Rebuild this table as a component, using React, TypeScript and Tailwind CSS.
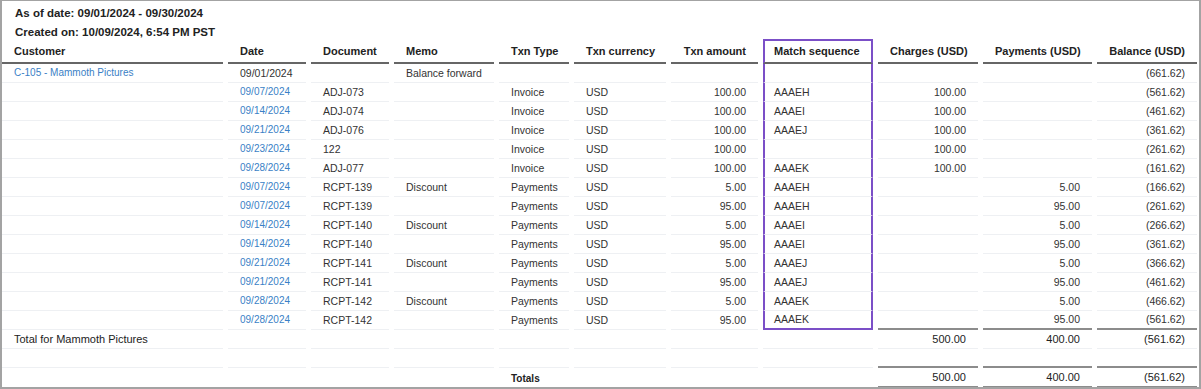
import React from "react";

type Row = string[];

// customer, date, document, memo, type, currency, amount, match, charges, payments, balance
const rows: Row[] = [
  ["C-105 - Mammoth Pictures", "09/01/2024", "", "Balance forward", "", "", "", "", "", "", "(661.62)"],
  ["", "09/07/2024", "ADJ-073", "", "Invoice", "USD", "100.00", "AAAEH", "100.00", "", "(561.62)"],
  ["", "09/14/2024", "ADJ-074", "", "Invoice", "USD", "100.00", "AAAEI", "100.00", "", "(461.62)"],
  ["", "09/21/2024", "ADJ-076", "", "Invoice", "USD", "100.00", "AAAEJ", "100.00", "", "(361.62)"],
  ["", "09/23/2024", "122", "", "Invoice", "USD", "100.00", "", "100.00", "", "(261.62)"],
  ["", "09/28/2024", "ADJ-077", "", "Invoice", "USD", "100.00", "AAAEK", "100.00", "", "(161.62)"],
  ["", "09/07/2024", "RCPT-139", "Discount", "Payments", "USD", "5.00", "AAAEH", "", "5.00", "(166.62)"],
  ["", "09/07/2024", "RCPT-139", "", "Payments", "USD", "95.00", "AAAEH", "", "95.00", "(261.62)"],
  ["", "09/14/2024", "RCPT-140", "Discount", "Payments", "USD", "5.00", "AAAEI", "", "5.00", "(266.62)"],
  ["", "09/14/2024", "RCPT-140", "", "Payments", "USD", "95.00", "AAAEI", "", "95.00", "(361.62)"],
  ["", "09/21/2024", "RCPT-141", "Discount", "Payments", "USD", "5.00", "AAAEJ", "", "5.00", "(366.62)"],
  ["", "09/21/2024", "RCPT-141", "", "Payments", "USD", "95.00", "AAAEJ", "", "95.00", "(461.62)"],
  ["", "09/28/2024", "RCPT-142", "Discount", "Payments", "USD", "5.00", "AAAEK", "", "5.00", "(466.62)"],
  ["", "09/28/2024", "RCPT-142", "", "Payments", "USD", "95.00", "AAAEK", "", "95.00", "(561.62)"],
];

const headers = [
  "Customer",
  "Date",
  "Document",
  "Memo",
  "Txn Type",
  "Txn currency",
  "Txn amount",
  "Match sequence",
  "Charges (USD)",
  "Payments (USD)",
  "Balance (USD)",
];

const widths = [221, 78, 78, 100, 70, 92, 87, 110, 100, 109, 100];
const rightCols = [6, 8, 9, 10];
const sumCols = [8, 9, 10];

const App = () => {
  const last = rows.length - 1;

  return (
    <div className="w-[1201px] h-[389px] overflow-hidden bg-white border-2 border-t border-[#a3a3a3] font-['Liberation_Sans',Arial,sans-serif]">
      <div className="pl-[13px] pt-[3px] mb-[-2px] text-[11.5px] font-bold text-[#222]">
        <div className="leading-[18px]">As of date: 09/01/2024 - 09/30/2024</div>
        <div className="leading-[18px] mt-px">Created on: 10/09/2024, 6:54 PM PST</div>
      </div>

      <table className="table-fixed w-[1205px] ml-[-5px] border-separate border-spacing-x-[5px] border-spacing-y-0">
        <colgroup>
          {widths.map((w, i) => (
            <col key={i} style={{ width: w }} />
          ))}
        </colgroup>
        <thead>
          <tr>
            {headers.map((h, i) => (
              <th
                key={h}
                className={
                  "p-0 leading-[21px] text-[11px] font-bold text-[#222] whitespace-nowrap border-b-2 border-b-[#666] " +
                  (i === 7
                    ? "pl-[9px] text-left border-t-2 border-x-2 border-t-[#7b4fc7] border-x-[#7b4fc7]"
                    : "border-t-2 border-t-transparent px-3 " + (rightCols.includes(i) ? "text-right" : "text-left"))
                }
              >
                {h}
              </th>
            ))}
          </tr>
        </thead>
        <tbody>
          {rows.map((r, ri) => (
            <tr key={ri}>
              {r.map((c, ci) => {
                const blue = (ci === 0 && c) || (ci === 1 && ri > 0);
                let cls = "p-0 whitespace-nowrap align-middle ";
                cls += rightCols.includes(ci) ? "text-right " : "text-left ";
                cls += blue ? "text-[10px] text-[#3a7fc6] " : "text-[10.5px] text-[#333] ";
                if (ci === 7) {
                  cls += "pl-[9px] border-x-2 border-x-[#7b4fc7] ";
                  cls +=
                    ri === last
                      ? "leading-[17px] border-b-2 border-b-[#7b4fc7] "
                      : "leading-[18px] border-b border-b-[#eef0f3] ";
                } else if (ri === last && sumCols.includes(ci)) {
                  cls += "px-3 leading-[17px] border-b-2 border-b-[#8c8c8c] ";
                } else {
                  cls += "px-3 leading-[18px] border-b border-b-[#eef0f3] ";
                }
                return (
                  <td key={ci} className={cls}>
                    {c}
                  </td>
                );
              })}
            </tr>
          ))}

          <tr>
            {widths.map((_, ci) => (
              <td
                key={ci}
                className={
                  "p-0 px-3 leading-[18px] text-[11px] text-[#222] whitespace-nowrap border-b border-b-[#eef0f3] " +
                  (rightCols.includes(ci) ? "text-right" : "text-left")
                }
              >
                {ci === 0 ? "Total for Mammoth Pictures" : ci === 8 ? "500.00" : ci === 9 ? "400.00" : ci === 10 ? "(561.62)" : ""}
              </td>
            ))}
          </tr>

          <tr className="h-[19px]">
            {widths.map((_, ci) => (
              <td
                key={ci}
                className={
                  "p-0 px-3 text-[11px] " +
                  (sumCols.includes(ci)
                    ? "leading-[17px] border-b-2 border-b-[#8c8c8c]"
                    : "leading-[18px] border-b border-b-[#eef0f3]")
                }
              >
                {"\u00a0"}
              </td>
            ))}
          </tr>

          <tr>
            {widths.map((_, ci) => (
              <td
                key={ci}
                className={
                  "p-0 px-3 leading-[18px] whitespace-nowrap text-[#222] " +
                  (rightCols.includes(ci) ? "text-right " : "text-left ") +
                  (sumCols.includes(ci) ? "text-[11px] border-b-[3px] border-double border-b-[#8c8c8c]" : "") +
                  (ci === 4 ? "text-[10px] font-bold" : "")
                }
              >
                {ci === 4 ? "Totals" : ci === 8 ? "500.00" : ci === 9 ? "400.00" : ci === 10 ? "(561.62)" : ""}
              </td>
            ))}
          </tr>
        </tbody>
      </table>
    </div>
  );
};

export default App;
